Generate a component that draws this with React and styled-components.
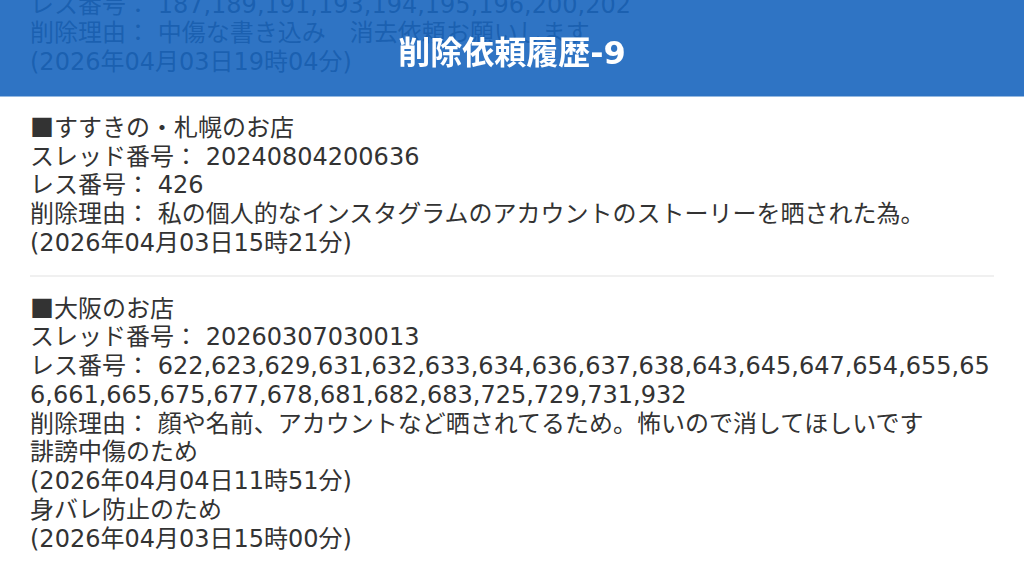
import React, { useLayoutEffect, useRef } from 'react';
import styled, { createGlobalStyle } from 'styled-components';

const GlobalStyle = createGlobalStyle`
  html, body {
    margin: 0;
    padding: 0;
    background: #fff;
    overflow: hidden;
  }
`;

const HEADER_HEIGHT = 96;

// Header (fixed, slightly see-through)
const Header = styled.header`
  position: fixed;
  top: 0;
  left: 0;
  right: 0;
  height: ${HEADER_HEIGHT}px;
  background-color: rgba(24, 101, 190, 0.9);
  box-shadow: 0 1px 0 rgba(43, 115, 195, 0.5);
  display: flex;
  align-items: center;
  justify-content: center;
  padding-top: 4px;
  box-sizing: border-box;
  z-index: 10;
`;

const Title = styled.h1`
  margin: 0;
  color: #fff;
  font-family: "DejaVu Sans", "Noto Sans CJK JP", sans-serif;
  font-size: 32px;
  font-weight: bold;
`;

// Scrolling list
const Scroller = styled.div`
  height: 100vh;
  overflow: hidden;
  position: relative;
`;

const List = styled.div`
  padding: ${HEADER_HEIGHT}px 30px 40px;
  color: #333;
  font-family: "DejaVu Sans", "Noto Sans CJK JP", sans-serif;
  font-size: 24px;
  line-height: 28.75px;
`;

const Entry = styled.section`
  padding: 16px 0 17px;
  border-bottom: 2px solid #f0f0f0;

  &:last-child {
    border-bottom: none;
  }
`;

const Line = styled.div`
  word-break: break-all;
`;

const Mark = styled.span`
  font-family: "Noto Sans CJK JP", sans-serif;
`;

const entries = [
  {
    shop: '名古屋のお店',
    thread: '20250912184410',
    res: '187,189,191,193,194,195,196,200,202',
    reasons: [{ text: '中傷な書き込み　消去依頼お願いします', date: '(2026年04月03日19時04分)' }],
  },
  {
    shop: 'すすきの・札幌のお店',
    thread: '20240804200636',
    res: '426',
    reasons: [
      {
        text: '私の個人的なインスタグラムのアカウントのストーリーを晒された為。',
        date: '(2026年04月03日15時21分)',
      },
    ],
  },
  {
    shop: '大阪のお店',
    thread: '20260307030013',
    res: '622,623,629,631,632,633,634,636,637,638,643,645,647,654,655,656,661,665,675,677,678,681,682,683,725,729,731,932',
    reasons: [
      {
        text: '顔や名前、アカウントなど晒されてるため。怖いので消してほしいです',
      },
      { text: '誹謗中傷のため', date: '(2026年04月04日11時51分)' },
      { text: '身バレ防止のため', date: '(2026年04月03日15時00分)' },
    ],
  },
];

function App() {
  const scrollerRef = useRef(null);
  const firstRef = useRef(null);

  // The page is shown scrolled so the second entry sits right under the header
  useLayoutEffect(() => {
    if (scrollerRef.current && firstRef.current) {
      scrollerRef.current.scrollTop = firstRef.current.offsetTop - HEADER_HEIGHT;
    }
  }, []);

  return (
    <>
      <GlobalStyle />
      <Header>
        <Title>削除依頼履歴-9</Title>
      </Header>

      <Scroller ref={scrollerRef}>
        <List>
          {entries.map((e, i) => (
            <Entry key={e.thread} ref={i === 1 ? firstRef : null}>
              <Line><Mark>■</Mark>{e.shop}</Line>
              <Line>スレッド番号： {e.thread}</Line>
              <Line>レス番号： {e.res}</Line>
              {e.reasons.map((r, j) => (
                <React.Fragment key={j}>
                  <Line>{j === 0 ? '削除理由： ' : ''}{r.text}</Line>
                  {r.date && <Line>{r.date}</Line>}
                </React.Fragment>
              ))}
            </Entry>
          ))}
        </List>
      </Scroller>
    </>
  );
}

export default App;
